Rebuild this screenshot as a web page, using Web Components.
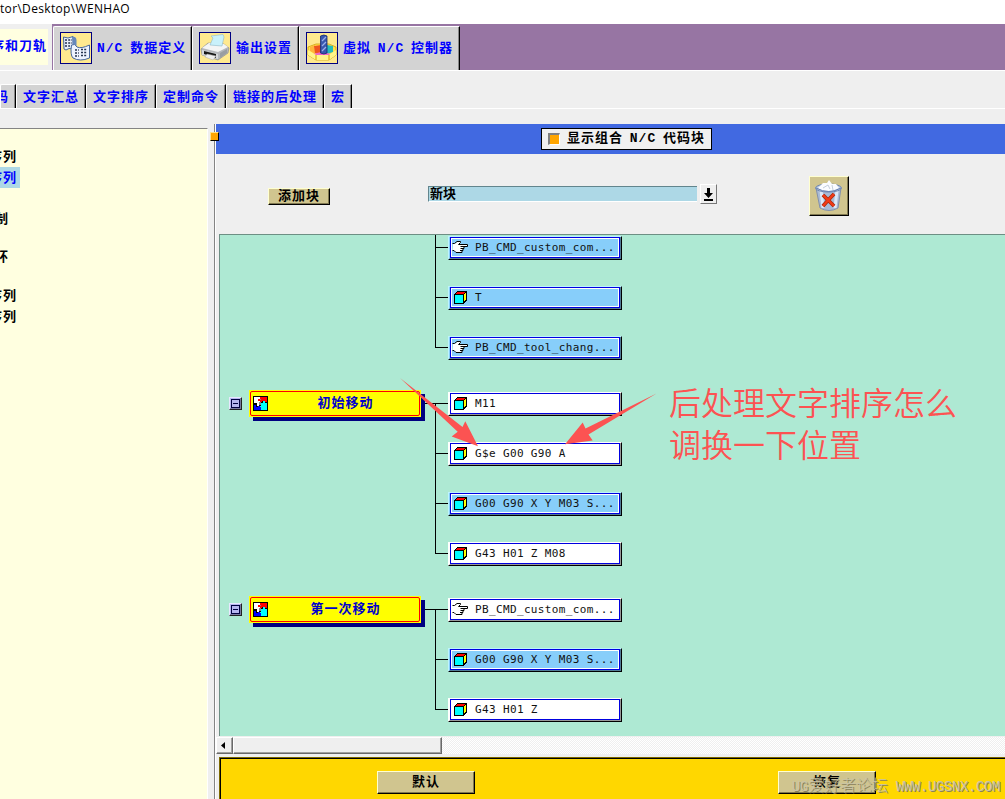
<!DOCTYPE html>
<html lang="zh-CN">
<head>
<meta charset="utf-8">
<title>Post Builder</title>
<style>
    html, body {
        margin: 0;
        height: 100%;
        overflow: hidden;
        background: #efefef;
    }
</style>
</head>
<body>
<post-builder></post-builder>

<script>
const ICONS = {
    data: `<svg width="30" height="30" viewBox="0 0 30 30">
        <path d="M2.500 4L7 5 12 3.500V16L8 15.500 5 17 3 16z" fill="#e9effb" stroke="#45669c"/>
        <path d="M10.500 12Q14 10 16 14Q20 16 28.500 12V25Q19 29 12 25Q9 22 10.500 12z" fill="#edf3ff" stroke="#45669c"/>
        <path d="M11 4Q15 3 15.500 7V13L12 11z" fill="#6688bb"/>
        <path d="M4 7h7M4 10h7M4 13h5M14 17h4M20 16.500h6M14 20h4M20 19.500h6M14 23h4M20 22.500h6" stroke="#26344f" stroke-width="1.300" stroke-dasharray="2 1.200"/>
    </svg>`,
    printer: `<svg width="30" height="30" viewBox="0 0 30 30">
        <path d="M1 16L8 10 24 11 29 15 28 20 18 27 2 22z" fill="#b5b8bc" stroke="#888" stroke-width=".6"/>
        <path d="M2 15L9 10 24 11 28 14 18 19z" fill="#f4f5f5"/>
        <path d="M11 3L23 1.500 24 4 22 13 10 12 13 5z" fill="#c9f1fb" stroke="#8fb9c7" stroke-width=".6"/>
        <path d="M2 17L18 21V26L2 22z" fill="#d7d9dc"/>
        <path d="M4 18L16 21V25L4 21z" fill="#161616"/>
        <path d="M7 21L16 23 13 27 5 24z" fill="#eee" stroke="#aaa" stroke-width=".5"/>
        <path d="M20 20L27 16V20L20 25z" fill="#999da2"/>
    </svg>`,
    machine: `<svg width="30" height="30" viewBox="0 0 30 30">
        <path d="M1 14L9 11H22L29 14V22L22 27H9L1 22z" fill="#ffe34f" stroke="#c99500" stroke-width=".7"/>
        <path d="M3 14L8 12V21L3 18z" fill="#ffb43c"/>
        <path d="M7 13L14 12V22L8 20z" fill="#ee551e"/>
        <path d="M20 12L26 13V19L20 21z" fill="#25bdb9"/>
        <path d="M6 21L14 19 24 21 19 23H10z" fill="#ee67c9"/>
        <path d="M1 17L9 22H22L29 17V22L22 27H9L1 22z" fill="#fff58a"/>
        <path d="M9 22V27M22 22V27" stroke="#d7a200"/>
        <path d="M13.500 3Q17 1 20 3V20Q17 22 13.500 20z" fill="#3858ae" stroke="#182a70" stroke-width=".8"/>
        <path d="M15 8L19 4M15 13L19 9M15 18L19 14" stroke="#9bb0ea" stroke-width="1.200"/>
    </svg>`,
    trash: `<svg width="30" height="32" viewBox="0 0 30 32">
        <path d="M2 8L27 8 24 28Q15 33 6 28z" fill="#a9bbd6" stroke="#8390ab"/>
        <path d="M7 10L9 28M23 10L21 28" stroke="#dce8f7" stroke-width="3"/>
        <ellipse cx="14.500" cy="8" rx="13" ry="4" fill="#bccae0" stroke="#6f86b0"/>
        <path d="M4 8L9 3 13 3 15 0 18 4 22 4 25 8 18 11 9 11z" fill="#fafcff"/>
        <path d="M9 8L14 5 16 9M18 5L19 10" fill="none" stroke="#c4cedc"/>
        <path d="M2 8Q15 15 27 8" fill="none" stroke="#6580b3"/>
        <path d="M9 15L20 26M20 14Q16 18 9 26" fill="none" stroke="#a52a10" stroke-width="3.800"/>
        <path d="M9 15L20 26M20 14Q16 18 9 26" fill="none" stroke="#f23b16" stroke-width="2.400"/>
    </svg>`,
    cube: `<svg width="14" height="14" viewBox="0 0 14 14" shape-rendering="crispEdges">
        <path d="M3 0H13V10H12V11H11V12H10V13H0V3H1V2H2V1H3z" fill="#000"/>
        <path d="M1 4H9V12H1z" fill="#0ff"/>
        <path d="M3 1H11V2H10V3H2V2H3z" fill="#f00"/>
        <path d="M11 2H12V9H11V10H10V3H11z" fill="#ff0"/>
    </svg>`,
    hand: `<svg width="17" height="13" viewBox="0 0 17 13">
        <path d="M1 2.500H3L5.500.500H8.500L9 1.500 7.500 3H15.500V5H11L12 6 11 7.500 10.500 9 9.500 11.500H4L2 9.500H.500z" fill="#fff"/>
        <path d="M.5 2.500H2.500L5 .5H8.500V1.500L6.500 3.500H15.500V5.500H8.500M9 5.500H12V7.500H8.500M9 7.500H11V9.500H8M8 9.500H10V11.500H4L2 9.500H.500" fill="none" stroke="#000"/>
    </svg>`,
    puzzle: `<svg width="15" height="15" viewBox="0 0 15 15" shape-rendering="crispEdges">
        <path d="M0 0H15V15H0z" fill="#000"/>
        <path d="M1 1H7V5H8V7H6V10H4V7H1z" fill="#fff"/>
        <path d="M7 1H14V6H12V5H9V6H7V5H5V3H7z" fill="#f00"/>
        <path d="M8 7H10V5H12V7H14V14H8V12H7V10H8z" fill="#0ff"/>
        <path d="M1 9H3V11H5V10H7V11H8V14H1z" fill="#00f"/>
        <path d="M6 6H8V9H6zM7 3H8V4H7z" fill="#888"/>
    </svg>`
};

class PbElement extends HTMLElement {
    constructor() {
        super();
        this.attachShadow({ mode: "open" });
    }

    connectedCallback() {
        this.shadowRoot.innerHTML = this.render();
    }
}

// big tab with an icon
class PbTab extends PbElement {
    render() {
        return `
        <style>
            :host {
                box-sizing: border-box;
                display: flex;
                align-items: center;
                height: 44px;
                padding: 0 0 1px 6px;
                gap: 5px;
                color: #00f;
                background: #d3d3d3;
                border-top: 1px solid #fff;
                border-left: 1px solid #fff;
                border-right: 1px solid #000;
                border-top-left-radius: 2px;
                box-shadow: inset -1px 0 #888;
            }
            .icon {
                width: 30px;
                height: 30px;
                border: 1px solid #000080;
                background: #ffe98f;
            }
            .text { padding-top: 2px; }
            svg { display: block; }
        </style>
        <div class="icon">${ICONS[this.getAttribute("icon")]}</div>
        <div class="text"><slot></slot></div>`;
    }
}
customElements.define("pb-tab", PbTab);

class PbSubtab extends PbElement {
    render() {
        return `
        <style>
            :host {
                box-sizing: border-box;
                display: block;
                height: 24px;
                padding-left: 6px;
                line-height: 25px;
                overflow: hidden;
                color: #00f;
                background: #d3d3d3;
                border-top: 1px solid #fff;
                border-left: 1px solid #fff;
                border-right: 1px solid #000;
                border-top-left-radius: 2px;
                box-shadow: inset -1px 0 #888;
            }
        </style>
        <slot></slot>`;
    }
}
customElements.define("pb-subtab", PbSubtab);

class PbButton extends PbElement {
    render() {
        return `
        <style>
            :host {
                box-sizing: border-box;
                display: flex;
                align-items: center;
                justify-content: center;
                background: #d0c58f;
                border: 1px solid #ffffd0;
                border-right-color: #000;
                border-bottom-color: #000;
                box-shadow: inset -1px -1px #807850;
            }
            svg { display: block; }
        </style>
        ${ICONS[this.getAttribute("icon")] || ""}<slot></slot>`;
    }
}
customElements.define("pb-button", PbButton);

// yellow event bar with its collapse box; sits on the canvas at --x / --y
class PbEvent extends PbElement {
    render() {
        return `
        <style>
            :host {
                position: absolute;
                left: var(--x);
                top: var(--y);
                display: flex;
                gap: 7px;
                color: #0000cd;
            }
            .toggle {
                box-sizing: border-box;
                width: 13px;
                height: 13px;
                margin-top: 7px;
                padding: 1px;
                background: #b5b5ef;
                border: 1px solid #e8e8ff;
                border-right-color: #222;
                border-bottom-color: #222;
                box-shadow: inset -1px -1px #77779f;
            }
            .toggle svg { display: block; }
            .bar {
                box-sizing: border-box;
                display: flex;
                align-items: center;
                width: 172px;
                height: 27px;
                padding: 1px;
                background: #ff0;
                box-shadow: 4px 4px #000080;
            }
            .frame {
                box-sizing: border-box;
                display: flex;
                align-items: center;
                width: 170px;
                height: 25px;
                padding-left: 2px;
                border: 1px solid #f00;
                border-radius: 2px;
            }
            .text {
                flex: 1;
                padding-left: 4px;
                text-align: center;
                line-height: 20px;
            }
        </style>
        <div class="toggle"><svg width="9" height="9" shape-rendering="crispEdges"><path d="M.5 .5H8.500V8.500H.500zM2 4.500H7" fill="none" stroke="#000040"/></svg></div>
        <div class="bar"><div class="frame">${ICONS.puzzle}<div class="text"><slot></slot></div></div></div>`;
    }
}
customElements.define("pb-event", PbEvent);

class PbBlock extends PbElement {
    render() {
        const kind = this.getAttribute("kind") || "cube";
        return `
        <style>
            :host {
                --fill: #fff;
                --light: #fff;
                --dark: #999;
                position: absolute;
                left: 228px;
                top: var(--y);
                box-sizing: border-box;
                width: 174px;
                height: 24px;
                border: 1px solid var(--light);
                border-right-color: #000;
                border-bottom-color: #000;
                font: 11px/18px "DejaVu Sans Mono", monospace;
                letter-spacing: .36px;
                word-spacing: 0;
                color: #111;
            }
            :host([shared]) {
                --fill: #87cefa;
                --light: #bdf3ff;
                --dark: #527c96;
            }
            .edge {
                box-sizing: border-box;
                height: 22px;
                border: solid var(--dark);
                border-width: 0 1px 1px 0;
                border-left: 1px solid var(--fill);
            }
            .face {
                box-sizing: border-box;
                display: flex;
                align-items: center;
                height: 21px;
                background: var(--fill);
                border: 1px solid #0000e0;
                box-shadow: inset 0 0 0 1px #fff;
            }
            .icon {
                box-sizing: border-box;
                width: 24px;
                padding-left: 3px;
            }
            .icon.hand { padding-left: 1px; }
            svg { display: block; }
        </style>
        <div class="edge"><div class="face"><div class="icon ${kind}">${ICONS[kind]}</div><slot></slot></div></div>`;
    }
}
customElements.define("pb-block", PbBlock);

class PbSequence extends PbElement {
    render() {
        return `
        <style>
            :host {
                position: relative;
                box-sizing: border-box;
                display: block;
                overflow: hidden;
                background: #aee9d3;
                border-top: 1px solid #6d8f84;
                border-left: 1px solid #6d8f84;
            }
            .lines {
                position: absolute;
                left: 0;
                top: 0;
            }
        </style>
        <svg class="lines" width="420" height="501" shape-rendering="crispEdges">
            <path d="M215.500 0V112.500H228M215.500 12.500H228M215.500 62.500H228M204 168.500H228M215.500 168.500V318.500H228M215.500 218.500H228M215.500 268.500H228M204 374.500H228M215.500 374.500V474.500H228M215.500 424.500H228" fill="none" stroke="#000"/>
        </svg>
        <slot></slot>`;
    }
}
customElements.define("pb-sequence", PbSequence);

// red remark and its two arrows, drawn over the canvas
class PbNote extends PbElement {
    render() {
        return `
        <style>
            :host {
                position: absolute;
                left: 170px;
                top: 130px;
                color: #fc5352;
                font: 350 32px/42px "Noto Sans CJK SC DemiLight", "Noto Sans CJK SC", sans-serif;
                letter-spacing: 0;
            }
            svg { display: block; }
            .text {
                position: absolute;
                left: 279px;
                top: 15px;
                white-space: nowrap;
            }
        </style>
        <svg width="280" height="100" viewBox="390 365 280 100" fill="#fc5352">
            <path d="M400 378L462.500 427 465.300 421.300 478 446.300 451.700 436.500 457.700 431.700z"/>
            <path d="M656.500 393.500L588.500 434.500 592.700 440.500 565 444.300 582.700 422.500 585.500 428.500z"/>
        </svg>
        <div class="text"><slot></slot></div>`;
    }
}
customElements.define("pb-note", PbNote);

class PbScrollbar extends PbElement {
    render() {
        return `
        <style>
            :host {
                display: flex;
                height: 17px;
                background: repeating-conic-gradient(#fff 0 25%, #efefef 0 50%) 0 0 / 2px 2px;
            }
            .arrow, .thumb {
                box-sizing: border-box;
                background: #efefef;
                border: 1px solid #fff;
                border-right-color: #696969;
                border-bottom-color: #696969;
                box-shadow: inset -1px -1px #a0a0a0;
            }
            .arrow { width: 17px; }
            .thumb { width: 209px; }
            svg { display: block; }
        </style>
        <div class="arrow"><svg width="14" height="14"><path d="M8 4V11L4 7.500z"/></svg></div>
        <div class="thumb"></div>`;
    }
}
customElements.define("pb-scrollbar", PbScrollbar);

class PostBuilder extends PbElement {
    render() {
        return `
        <style>
            :host {
                position: relative;
                display: flex;
                flex-direction: column;
                width: 1005px;
                height: 799px;
                overflow: hidden;
                background: #efefef;
                color: #000;
                font: bold 13px/16px "Liberation Mono", "Noto Sans CJK SC", monospace;
                letter-spacing: 1px;
                word-spacing: -2px;
                white-space: nowrap;
            }
            .title {
                height: 24px;
                background: #fff;
                font: 12px/17px "Open Sans", sans-serif;
                letter-spacing: .33px;
                word-spacing: 0;
            }
            .tabs {
                display: flex;
                height: 46px;
                border-bottom: 1px solid #fff;
                background: #9775a3;
            }
            .tabs pb-tab { margin-top: 2px; }
            .current {
                box-sizing: border-box;
                width: 52px;
                padding: 5px 4px 5px 0;
                background: #efefef;
            }
            .current div {
                display: flex;
                justify-content: flex-end;
                height: 36px;
                padding-right: 1px;
                line-height: 36px;
                background: #ffffe0;
                color: #00f;
                overflow: hidden;
            }
            .tabs pb-tab:nth-child(2) { width: 139px; margin-left: 1px; }
            .tabs pb-tab:nth-child(3) { width: 107px; }
            .tabs pb-tab:nth-child(4) { width: 161px; }
            .subtabs {
                display: flex;
                height: 24px;
                margin-top: 13px;
                border-bottom: 1px solid #fff;
            }
            .subtabs pb-subtab { width: 70px; }
            .subtabs pb-subtab:nth-child(1) { width: 16px; padding-left: 0; }
            .subtabs pb-subtab:nth-child(1) span { margin-left: -6px; }
            .subtabs pb-subtab:nth-child(5) { width: 98px; }
            .subtabs pb-subtab:nth-child(6) { width: 28px; }
            .body {
                display: flex;
                flex: 1;
                min-height: 0;
                padding-top: 15px;
            }
            .tree {
                box-sizing: border-box;
                width: 208px;
                margin-top: 4px;
                padding-top: 17px;
                background: #ffffe0;
                border-top: 1px solid #848484;
                border-right: 1px solid #fff;
                overflow: hidden;
            }
            .row {
                display: flex;
                justify-content: flex-end;
                width: 17px;
                height: 21px;
                line-height: 23px;
                margin-bottom: var(--gap, 0);
            }
            .row.short { width: 9px; }
            .row.on {
                padding-right: 3px;
                background: #add8e6;
                color: #00f;
            }
            .sash {
                position: relative;
                box-sizing: border-box;
                width: 8px;
                border-right: 1px solid #fff;
                box-shadow: inset -1px 0 #848484;
            }
            .grip {
                position: absolute;
                left: 2px;
                top: 8px;
                width: 7px;
                height: 7px;
                background: #ffa500;
                border: 1px solid #ffe08a;
                border-right-color: #000;
                border-bottom-color: #000;
            }
            .main {
                display: flex;
                flex-direction: column;
                flex: 1;
            }
            .head {
                display: flex;
                align-items: center;
                box-sizing: border-box;
                height: 30px;
                padding-left: 325px;
                background: #4169e1;
            }
            .check {
                display: flex;
                align-items: center;
                box-sizing: border-box;
                width: 171px;
                height: 22px;
                padding-left: 6px;
                gap: 7px;
                background: #f0f0f0;
                border: 1px solid #000;
            }
            .box {
                width: 9px;
                height: 9px;
                background: #ffa500;
                border: 1px solid #808080;
                border-width: 2px 1px 1px 2px;
                border-right-color: #fff;
                border-bottom-color: #fff;
            }
            .tools {
                display: flex;
                height: 80px;
                align-items: flex-start;
            }
            .add {
                width: 62px;
                height: 17px;
                margin: 34px 0 0 52px;
            }
            .field {
                box-sizing: border-box;
                width: 269px;
                height: 16px;
                margin: 32px 3px 0 98px;
                padding-left: 1px;
                line-height: 16px;
                background: #add8e6;
                border-top: 1px solid #62858d;
                border-left: 1px solid #62858d;
                border-bottom: 1px solid #fff;
                letter-spacing: 0;
            }
            .drop {
                box-sizing: border-box;
                width: 17px;
                height: 20px;
                margin-top: 30px;
                border: 1px solid #fff;
                border-right-color: #777;
                border-bottom-color: #777;
            }
            .drop svg { display: block; }
            .trash {
                width: 40px;
                height: 40px;
                margin: 22px 0 0 92px;
            }
            pb-sequence {
                height: 502px;
                margin-left: 3px;
            }
            pb-scrollbar { margin-top: 1px; }
            .actions {
                display: flex;
                gap: 303px;
                flex: 1;
                margin: 3px 0 0 3px;
                padding: 13px 0 0 157px;
                background: #ffd700;
                border-top: 1px solid #7d6900;
                border-left: 1px solid #7d6900;
                box-shadow: inset 1px 1px #000;
            }
            .actions pb-button {
                width: 98px;
                height: 23px;
            }
            .mark {
                position: absolute;
                right: 5px;
                top: 777px;
                color: #c9c4a6;
                font: 14px/20px "Liberation Mono", "Noto Sans CJK SC", monospace;
                letter-spacing: -.4px;
                word-spacing: 0;
                text-shadow: 1px 1px #8a815c;
            }
            .mark b {
                font-size: 16px;
                font-weight: 300;
                letter-spacing: 0;
            }
        </style>
        <div class="title">tor\\Desktop\\WENHAO</div>
        <div class="tabs">
            <div class="current"><div>序和刀轨</div></div>
            <pb-tab icon="data">N/C 数据定义</pb-tab>
            <pb-tab icon="printer">输出设置</pb-tab>
            <pb-tab icon="machine">虚拟 N/C 控制器</pb-tab>
        </div>
        <div class="subtabs">
            <pb-subtab><span>码</span></pb-subtab>
            <pb-subtab>文字汇总</pb-subtab>
            <pb-subtab>文字排序</pb-subtab>
            <pb-subtab>定制命令</pb-subtab>
            <pb-subtab>链接的后处理</pb-subtab>
            <pb-subtab>宏</pb-subtab>
        </div>
        <div class="body">
            <div class="tree">
                <div class="row">序列</div>
                <div class="row on" style="--gap: 20px">序列</div>
                <div class="row short" style="--gap: 17px">制</div>
                <div class="row short" style="--gap: 18px">环</div>
                <div class="row">序列</div>
                <div class="row">序列</div>
            </div>
            <div class="sash"><div class="grip"></div></div>
            <div class="main">
                <div class="head">
                    <div class="check"><div class="box"></div>显示组合 N/C 代码块</div>
                </div>
                <div class="tools">
                    <pb-button class="add">添加块</pb-button>
                    <div class="field">新块</div>
                    <div class="drop"><svg width="15" height="18" viewBox="0 0 15 18"><path d="M6 3H9V8H12L7.500 13 3 8H6zM3 14H12V16H3z"/></svg></div>
                    <pb-button class="trash" icon="trash"></pb-button>
                </div>
                <pb-sequence>
                    <pb-block shared kind="hand" style="--y: 1px">PB_CMD_custom_com...</pb-block>
                    <pb-block shared style="--y: 51px">T</pb-block>
                    <pb-block shared kind="hand" style="--y: 101px">PB_CMD_tool_chang...</pb-block>
                    <pb-event style="--x: 9px; --y: 155px">初始移动</pb-event>
                    <pb-block style="--y: 157px">M11</pb-block>
                    <pb-block style="--y: 207px">G$e G00 G90 A</pb-block>
                    <pb-block shared style="--y: 257px">G00 G90 X Y M03 S...</pb-block>
                    <pb-block style="--y: 307px">G43 H01 Z M08</pb-block>
                    <pb-event style="--x: 9px; --y: 361px">第一次移动</pb-event>
                    <pb-block kind="hand" style="--y: 363px">PB_CMD_custom_com...</pb-block>
                    <pb-block shared style="--y: 413px">G00 G90 X Y M03 S...</pb-block>
                    <pb-block style="--y: 463px">G43 H01 Z</pb-block>
                    <pb-note>后处理文字排序怎么<br>调换一下位置</pb-note>
                </pb-sequence>
                <pb-scrollbar></pb-scrollbar>
                <div class="actions">
                    <pb-button>默认</pb-button>
                    <pb-button>恢复</pb-button>
                </div>
            </div>
        </div>
        <div class="mark">UG<b>爱好者论坛</b> WWW.UGSNX.COM</div>`;
    }
}
customElements.define("post-builder", PostBuilder);
</script>
</body>
</html>
